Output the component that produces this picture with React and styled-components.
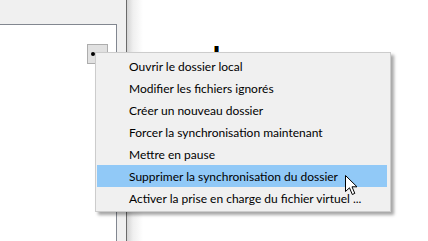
import styled, { createGlobalStyle } from "styled-components";

const GlobalStyle = createGlobalStyle`
  html, body {
    margin: 0;
    padding: 0;
    background: #ffffff;
  }
  body {
    font-family: "Lato", "Noto Sans", sans-serif;
  }
`;

const Page = styled.div`
  position: relative;
  display: flex;
  width: 428px;
  height: 241px;
  overflow: hidden;
`;

const LeftPane = styled.div`
  width: 126px;
  display: flex;
  flex-direction: column;
  background: #f0f0f0;
`;

const TopStrip = styled.div`
  height: 24px;
`;

const Panel = styled.div`
  flex: 1;
  margin-right: 9px;
  background: #ffffff;
  border-top: 1px solid #828790;
  border-right: 1px solid #828790;
  padding: 19px 0 0 87px;
`;

const DotButton = styled.div`
  box-sizing: border-box;
  width: 21px;
  height: 20px;
  background: #e1e1e1;
  border: 1px solid #adadad;
  display: flex;
  align-items: center;
  padding-left: 3px;

  &::before {
    content: "";
    width: 4px;
    height: 4px;
    border-radius: 50%;
    background: #000;
  }
`;

const RightPane = styled.div`
  flex: 1;
  border-left: 1px solid #6a6a6a;
  background: linear-gradient(to right, #d4d4d4 0px, #efefef 6px, #ffffff 16px);
  padding: 46px 0 0 87px;
`;

const Caret = styled.div`
  width: 3px;
  height: 7px;
  background: #000;
  border-left: 1px solid #e08a00;
  border-right: 1px solid #1e78d0;
`;

const Menu = styled.ul`
  position: absolute;
  left: 95px;
  top: 52px;
  box-sizing: border-box;
  width: 296px;
  margin: 0;
  padding: 2px 3px 2px 1px;
  list-style: none;
  background: #f0f0f0;
  border: 1px solid #cccccc;
  box-shadow: 3px 3px 3px rgba(0, 0, 0, 0.35);
`;

const Item = styled.li`
  height: 22px;
  line-height: 23px;
  padding-left: 32px;
  font-size: 12px;
  color: #000;
  white-space: nowrap;
  background: ${(p) => (p.$active ? "#91c9f7" : "transparent")};
`;

const Pointer = styled.svg`
  position: absolute;
  left: 345px;
  top: 175px;
`;

const items = [
  "Ouvrir le dossier local",
  "Modifier les fichiers ignorés",
  "Créer un nouveau dossier",
  "Forcer la synchronisation maintenant",
  "Mettre en pause",
  "Supprimer la synchronisation du dossier",
  "Activer la prise en charge du fichier virtuel  ...",
];

export default function App() {
  return (
    <>
      <GlobalStyle />
      <Page>
        <LeftPane>
          <TopStrip />
          <Panel>
            <DotButton />
          </Panel>
        </LeftPane>
        <RightPane>
          <Caret />
        </RightPane>
        <Menu>
          {items.map((label, i) => (
            <Item key={label} $active={i === 5}>
              {label}
            </Item>
          ))}
        </Menu>
        <Pointer width="14" height="22" viewBox="0 0 14 22">
          <path
            d="M0.5 0.5 L0.5 16.5 L4.5 12.8 L7.3 19.5 L9.8 18.4 L7 11.8 L12 11.8 Z"
            fill="#ffffff"
            stroke="#000000"
            strokeWidth="1"
            strokeLinejoin="miter"
          />
        </Pointer>
      </Page>
    </>
  );
}
